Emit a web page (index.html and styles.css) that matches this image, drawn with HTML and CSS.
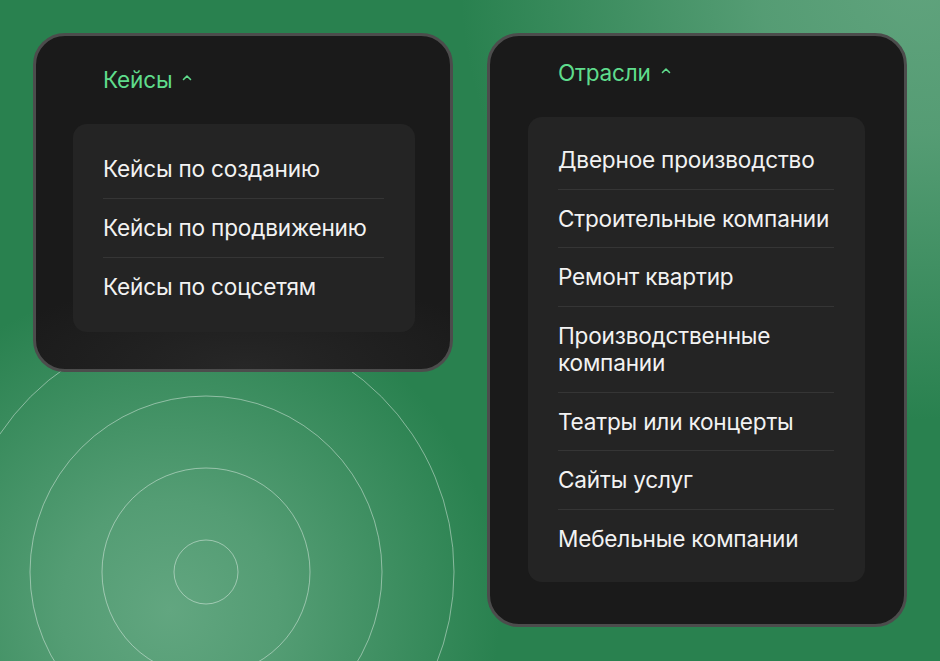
FILE: index.html
```html
<!DOCTYPE html>
<html lang="ru">
<head>
<meta charset="utf-8">
<title>Меню</title>
<link rel="stylesheet" href="styles.css">
</head>
<body>
<div class="page">
  <svg class="rings" width="940" height="661" viewBox="0 0 940 661" aria-hidden="true">
    <g fill="none" stroke="rgba(255,255,255,0.42)" stroke-width="1">
      <circle cx="206" cy="572" r="32"/>
      <circle cx="206" cy="572" r="104"/>
      <circle cx="206" cy="572" r="176"/>
      <circle cx="206" cy="572" r="248"/>
    </g>
  </svg>

  <section class="card card-left">
    <div class="title">Кейсы
      <svg class="caret" width="10" height="7" viewBox="0 0 10 7"><path d="M1.5 5.5 L5 2 L8.5 5.5" fill="none" stroke="#5fdc8c" stroke-width="1.6" stroke-linecap="round" stroke-linejoin="round"/></svg>
    </div>
    <ul class="panel panel-left">
      <li class="item">Кейсы по созданию</li>
      <li class="item">Кейсы по продвижению</li>
      <li class="item">Кейсы по соцсетям</li>
    </ul>
  </section>

  <section class="card card-right">
    <div class="title">Отрасли
      <svg class="caret" width="10" height="7" viewBox="0 0 10 7"><path d="M1.5 5.5 L5 2 L8.5 5.5" fill="none" stroke="#5fdc8c" stroke-width="1.6" stroke-linecap="round" stroke-linejoin="round"/></svg>
    </div>
    <ul class="panel panel-right">
      <li class="item">Дверное производство</li>
      <li class="item">Строительные компании</li>
      <li class="item">Ремонт квартир</li>
      <li class="item">Производственные<br>компании</li>
      <li class="item">Театры или концерты</li>
      <li class="item">Сайты услуг</li>
      <li class="item">Мебельные компании</li>
    </ul>
  </section>
</div>
</body>
</html>
```

FILE: styles.css
```css
* { box-sizing: border-box; }
html, body { margin: 0; padding: 0; }
body {
  font-family: Inter, "Noto Sans", "DejaVu Sans", sans-serif;
  width: 940px;
  height: 661px;
  overflow: hidden;
}
.page {
  position: relative;
  width: 940px;
  height: 661px;
  display: flex;
  align-items: flex-start;
  gap: 34px;
  padding: 33px 0 0 33px;
  background:
    radial-gradient(circle at 170px 610px, rgba(98,166,128,1) 0, rgba(98,166,128,0.75) 110px, rgba(98,166,128,0) 330px),
    radial-gradient(ellipse 460px 440px at 920px -20px, rgba(96,163,125,1) 0, rgba(96,163,125,0.8) 35%, rgba(96,163,125,0) 100%),
    #29814f;
}
.rings {
  position: absolute;
  left: 0;
  top: 0;
  pointer-events: none;
}
.card {
  position: relative;
  width: 420px;
  background: #1a1a1a;
  border: 3px solid #4c4c4c;
  border-radius: 32px;
}
.card-left {
  padding: 30px 35px 37px 37px;
  background:
    radial-gradient(ellipse 260px 90px at 210px 330px, rgba(40,40,40,0.9), rgba(40,40,40,0)),
    #1a1a1a;
}
.card-right {
  padding: 23px 39px 42px 38px;
}
.title {
  display: flex;
  align-items: center;
  gap: 10px;
  padding-left: 30px;
  font-size: 22.6px;
  line-height: 27px;
  color: #5fdc8c;
  letter-spacing: -0.2px;
  margin-bottom: 31px;
}
.caret { position: relative; top: -2px; }
.panel {
  list-style: none;
  margin: 0;
  background: #242424;
  border-radius: 14px;
  padding-left: 30px;
  padding-right: 31px;
}
.panel-left { padding-top: 16px; padding-bottom: 16px; }
.panel-right { padding-top: 14px; padding-bottom: 15px; }
.item {
  padding: 15px 0 16px;
  font-size: 22.6px;
  line-height: 27px;
  color: #f2f2f2;
  letter-spacing: -0.2px;
}
.panel-right .item { padding: 15px 0; line-height: 27.5px; }
.item + .item { border-top: 1px solid #353535; }
```
